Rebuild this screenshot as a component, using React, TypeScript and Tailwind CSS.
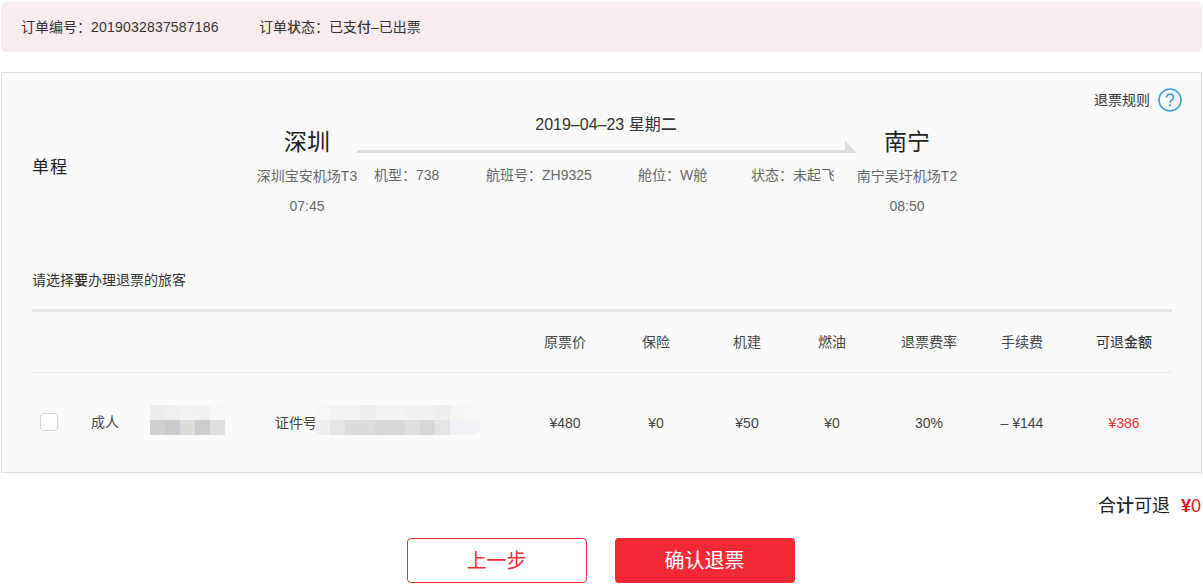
const font = '[font-family:"Liberation_Sans","Noto_Sans_CJK_SC",sans-serif]';

const nameMosaic = [
  ['bg-[#ececec]', 'bg-[#f0f0f0]', 'bg-[#f2f2f0]', 'bg-[#f1f1f1]', 'bg-[#f7f7f7]'],
  ['bg-[#d2d0d1]', 'bg-[#cbcbcd]', 'bg-[#dcdcd9]', 'bg-[#cdcdcf]', 'bg-[#dedfe1]'],
];

const idMosaic = [
  ['bg-[#f6f6f6]', 'bg-[#f3f3f3]', 'bg-[#f3f3f2]', 'bg-[#eeeeee]', 'bg-[#f2f2f2]', 'bg-[#f3f3f3]', 'bg-[#f1f1f1]', 'bg-[#f1f1f1]', 'bg-[#eeeeee]', 'bg-[#f5f5f4]', 'bg-[#f7f7f7]'],
  ['bg-[#eeeeee]', 'bg-[#e3e5e5]', 'bg-[#dcdcdc]', 'bg-[#dcdcdc]', 'bg-[#d7d7d8]', 'bg-[#d8d8d9]', 'bg-[#dedfdc]', 'bg-[#d6d7d9]', 'bg-[#e5e4e2]', 'bg-[#f1f2f6]', 'bg-[#f1f2f6]'],
];

function Mosaic({ rows, className }: { rows: string[][]; className: string }) {
  return (
    <div className={className}>
      {rows.map((row, i) => (
        <div key={i} className="flex">
          {row.map((c, j) => (
            <div key={j} className={`w-[15px] h-[15px] ${c}`} />
          ))}
        </div>
      ))}
    </div>
  );
}

function Stop({ city, airport, time }: { city: string; airport: string; time: string }) {
  return (
    <div className="w-[100px] shrink-0 flex flex-col items-center pt-[15px]">
      <div className="text-[23px] leading-[28px] text-[#222]">{city}</div>
      <div className="mt-[10px] text-[14px] leading-[20px] text-[#666] whitespace-nowrap">{airport}</div>
      <div className="mt-[10px] text-[14px] leading-[20px] text-[#666]">{time}</div>
    </div>
  );
}

export default function App() {
  return (
    <div className={`${font} w-[1203px] h-[587px] bg-white pt-[2px] px-px overflow-hidden text-[#333]`}>
      <div className="h-[50px] bg-[#f7ecee] rounded-[5px] flex items-center pl-[20px] text-[14px] text-[#333]">
        <span className="w-[238px]">订单编号：<span className="tracking-[0.2px]">2019032837587186</span></span>
        <span>订单<b className="font-medium">状</b>态：已支<b className="font-medium">付</b>–已出票</span>
      </div>

      <div className="mt-5 h-[401px] border border-[#ddd] bg-[#fafafa] flex flex-col pl-[30px] pr-[29px]">
        <div className="h-[41px] -mr-[10px] flex items-end justify-end gap-2">
          <span className="text-[14px] leading-[26px] text-[#333]">退票规则</span>
          <svg width="24" height="24" viewBox="0 0 24 24" fill="none" className="mb-[1px]">
            <circle cx="12" cy="12" r="11" stroke="#3a9fdc" strokeWidth="1.6" />
            <path d="M8.6 9.4c0-2 1.5-3.4 3.5-3.4s3.4 1.3 3.4 3.1c0 1.4-.8 2.1-1.8 2.9-1 .8-1.6 1.4-1.6 2.8" stroke="#3a9fdc" strokeWidth="1.7" />
            <rect x="11.2" y="16.4" width="1.8" height="2" fill="#3a9fdc" />
          </svg>
        </div>

        <div className="flex h-[124px]">
          <div className="w-[225px] pt-[43px] text-[17px] leading-[24px] text-[#222] tracking-[1px]">单程</div>
          <Stop city="深圳" airport="深圳宝安机场T3" time="07:45" />
          <div className="w-[500px] shrink-0 flex flex-col">
            <div className="text-center text-[16px] leading-[20px] text-[#333] mt-[2px] pr-[2px]">2019–04–23 星期<b className="font-medium">二</b></div>
            <div className="mt-[6px] flex items-end h-[12px]">
              <div className="h-[3px] flex-1 bg-[#dcdcdc]" />
              <svg width="12" height="12" viewBox="0 0 12 12" className="block shrink-0">
                <path d="M0 0 12 12H0Z" fill="#dcdcdc" />
              </svg>
            </div>
            <div className="mt-[12px] flex text-[14px] leading-[20px] text-[#666] whitespace-nowrap">
              <span className="ml-[17px] w-[112px]">机型：738</span>
              <span className="w-[152px]">航班号：ZH9325</span>
              <span className="w-[113px]">舱位：W舱</span>
              <span className="w-[83px] overflow-hidden">状态：未起飞</span>
            </div>
          </div>
          <Stop city="南宁" airport="南宁吴圩机场T2" time="08:50" />
        </div>

        <div className="mt-[36px] text-[14px] leading-[20px] text-[#333]">请选择<b className="font-medium">要</b>办理退票的旅客</div>

        <div className="mt-[19px] border-t-[3px] border-[#e5e5e5]">
          <div className="grid grid-cols-[488px_90px_92px_90px_80px_114px_72px_114px] items-center h-[61px] pt-px border-b border-[#e8e8e8] text-[14px] text-[#444] text-center">
            <div />
            <div>原票价</div>
            <div>保险</div>
            <div>机建</div>
            <div>燃油</div>
            <div>退票费率</div>
            <div>手续费</div>
            <div className="pl-[18px] text-[#333]">可退<b className="font-medium">金额</b></div>
          </div>
          <div className="grid grid-cols-[488px_90px_92px_90px_80px_114px_72px_114px] items-center h-[99px] text-[14px] text-[#444] text-center [&>div:not(:first-child)]:pt-[2px]">
            <div className="relative flex items-center text-left h-[99px]">
              <div className="ml-[8px] -mt-[2px] w-[18px] h-[18px] rounded-[4px] border border-[#d4d4d4] bg-white" />
              <span className="ml-[33px]">成人</span>
              <span className="ml-[156px] pt-[2px]">证件号</span>
              <Mosaic rows={nameMosaic} className="absolute left-[118px] top-[32px] rounded-tr-[8px] rounded-tl-[3px] overflow-hidden" />
              <Mosaic rows={idMosaic} className="absolute left-[283px] top-[32px] rounded-[8px] overflow-hidden" />
            </div>
            <div>¥480</div>
            <div>¥0</div>
            <div>¥50</div>
            <div>¥0</div>
            <div>30%</div>
            <div>– ¥144</div>
            <div className="pl-[18px] text-[#f02d37]">¥386</div>
          </div>
        </div>
      </div>

      <div className="mt-[21px] flex justify-end items-center h-[24px] pr-px text-[18px] text-[#222]">
        <span>合<b className="font-medium">计</b>可退</span>
        <span className="ml-[11px] text-[#e8121c]"><b className="font-semibold">¥</b>0</span>
      </div>

      <div className="mt-[20px] flex justify-center gap-[28px] pr-[2px]">
        <button className="w-[180px] h-[45px] rounded-[4px] border border-[#f02d37] bg-white text-[#f02d37] text-[20px]">上一步</button>
        <button className="w-[180px] h-[45px] rounded-[4px] bg-[#f12a36] text-white text-[20px]">确认退票</button>
      </div>
    </div>
  );
}
